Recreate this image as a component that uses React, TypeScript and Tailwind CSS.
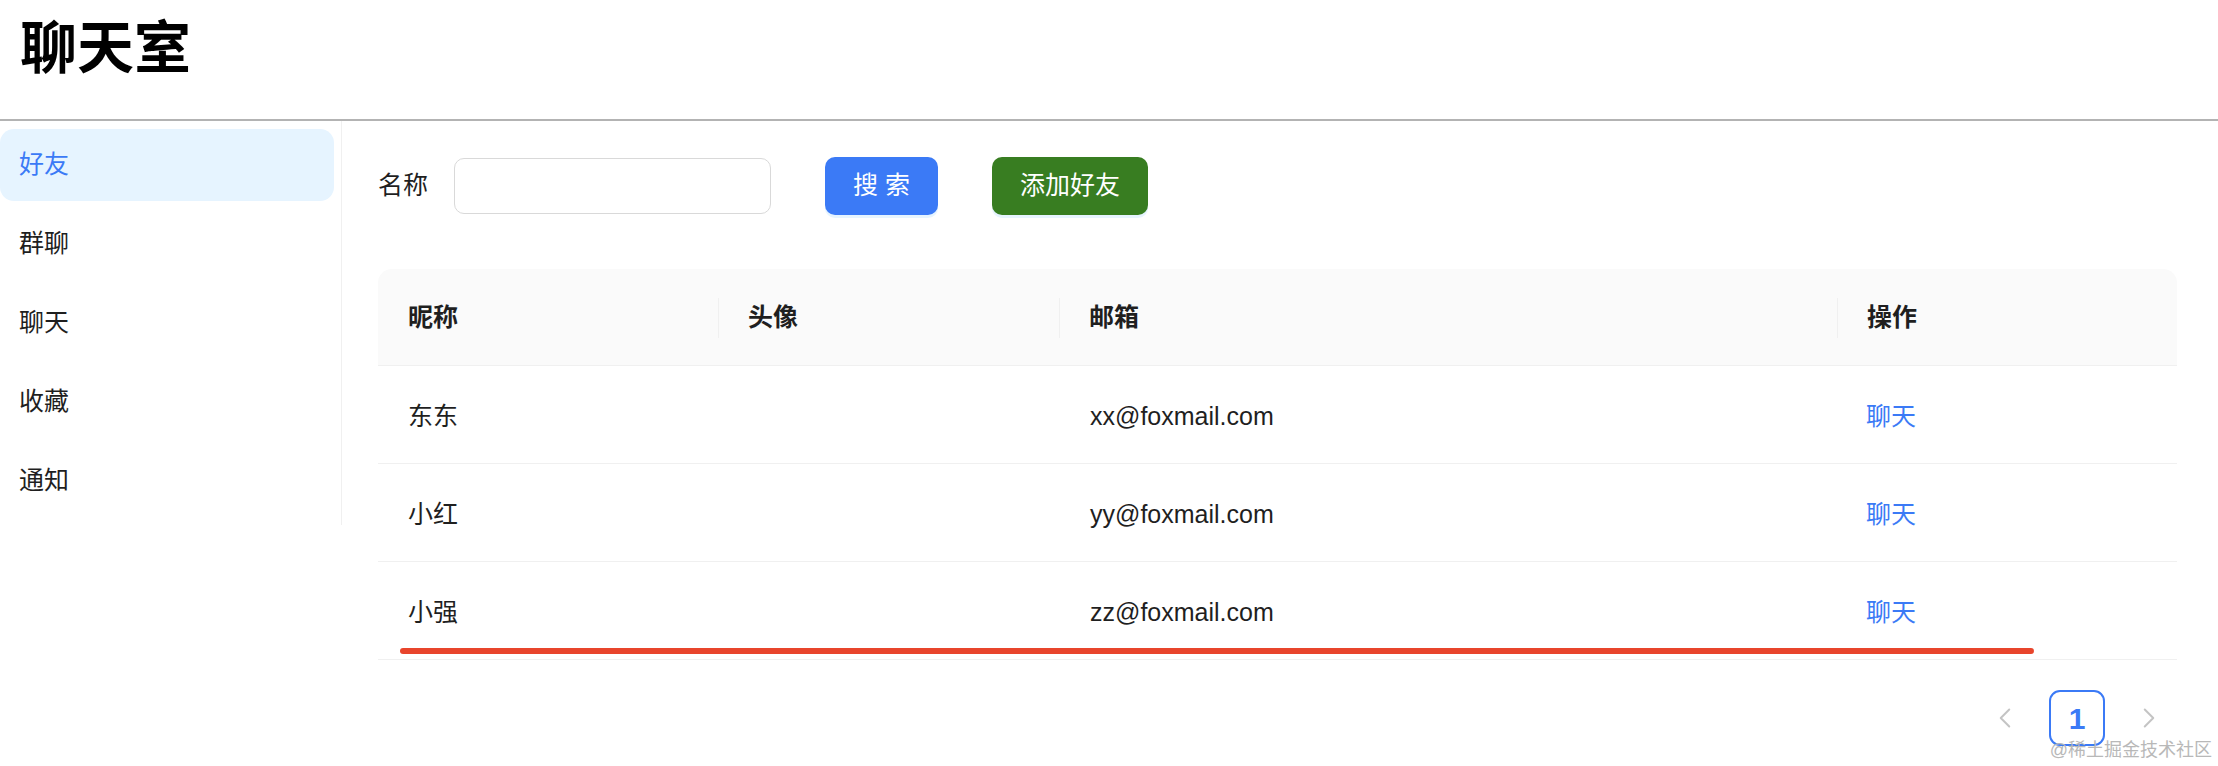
import React from 'react';
import { ChevronLeft, ChevronRight } from 'lucide-react';

const menuItems = ['好友', '群聊', '聊天', '收藏', '通知'];

const friends = [
    { name: '东东', email: 'xx@foxmail.com' },
    { name: '小红', email: 'yy@foxmail.com' },
    { name: '小强', email: 'zz@foxmail.com' },
];

const columns = ['昵称', '头像', '邮箱', '操作'];

const App: React.FC = () => {
    return (
        <div
            className="relative w-full h-[766px] bg-white text-[#1f1f1f] overflow-hidden"
            style={{ fontFamily: '"Liberation Sans", "Noto Sans CJK SC", sans-serif' }}
        >
            {/* header */}
            <header className="h-[121px] border-b-2 border-[#b3b3b3] pl-[20px] pt-[16px]">
                <h1 className="text-[57px] leading-[64px] font-bold text-black">聊天室</h1>
            </header>

            <div className="flex">
                {/* side menu */}
                <nav className="w-[342px] h-[404px] border-r border-[#f0f0f0] pt-[8px] flex flex-col gap-[7px]">
                    {menuItems.map((item, i) => (
                        <div
                            key={item}
                            className={`w-[334px] h-[72px] pl-[19px] flex items-center text-[25px] rounded-[14px] ${
                                i === 0 ? 'bg-[#e6f4ff] text-[#3b7af6]' : 'text-[#1f1f1f]'
                            }`}
                        >
                            {item}
                        </div>
                    ))}
                </nav>

                {/* main content */}
                <main className="flex-1 pl-[36px] pr-[41px] pt-[36px]">
                    <div className="flex items-center h-[58px]">
                        <span className="text-[25px]">名称</span>
                        <input className="ml-[26px] w-[317px] h-[56px] rounded-[10px] border border-[#d9d9d9] bg-white outline-none px-[16px] text-[25px]" />
                        <button className="ml-[54px] w-[113px] h-[58px] rounded-[10px] bg-[#3b7af6] text-white text-[25px] shadow-[0_3px_0_rgba(5,145,255,0.1)]">
                            搜 索
                        </button>
                        <button className="ml-[54px] w-[156px] h-[58px] rounded-[10px] bg-[#387d21] text-white text-[25px] shadow-[0_3px_0_rgba(5,145,255,0.1)]">
                            添加好友
                        </button>
                    </div>

                    {/* table */}
                    <div className="relative mt-[54px]">
                        <div className="grid grid-cols-[340px_341px_778px_1fr] h-[97px] bg-[#fafafa] rounded-t-[14px] border-b border-[#f0f0f0]">
                            {columns.map((col, i) => (
                                <div key={col} className="relative flex items-center pl-[30px] pt-[2px] text-[25px] font-bold text-[#1f1f1f]">
                                    {i > 0 && <span className="absolute left-0 top-[29px] w-px h-[40px] bg-[#f0f0f0]" />}
                                    {col}
                                </div>
                            ))}
                        </div>
                        {friends.map((f) => (
                            <div key={f.name} className="grid grid-cols-[340px_341px_778px_1fr] h-[98px] border-b border-[#f0f0f0] text-[25px]">
                                <div className="flex items-center pl-[30px] pt-[4px]">{f.name}</div>
                                <div className="flex items-center pl-[30px] pt-[4px]"></div>
                                <div className="flex items-center pl-[31px] pt-[4px]">{f.email}</div>
                                <div className="flex items-center pl-[29px] pt-[4px] text-[#3b7af6]">聊天</div>
                            </div>
                        ))}
                        {/* red annotation underline */}
                        <div className="absolute left-[22px] top-[379px] w-[1634px] h-[6px] rounded-full bg-[#e8452c]" />
                    </div>

                    {/* pagination */}
                    <div className="mt-[30px] flex justify-end gap-[16px]">
                        <div className="w-[56px] h-[56px] flex items-center justify-center text-[#c4c4c4]">
                            <ChevronLeft size={34} strokeWidth={1.4} />
                        </div>
                        <div className="w-[56px] h-[56px] flex items-center justify-center rounded-[11px] border-2 border-[#3b7af6] text-[#3b7af6] text-[30px] font-bold">
                            1
                        </div>
                        <div className="w-[56px] h-[56px] flex items-center justify-center text-[#c4c4c4]">
                            <ChevronRight size={34} strokeWidth={1.4} />
                        </div>
                    </div>
                </main>
            </div>

            {/* watermark */}
            <span className="absolute right-[6px] top-[738px] text-[18px] leading-[24px] text-[#b8b8b8]">
                @稀土掘金技术社区
            </span>
        </div>
    );
};

export default App;
